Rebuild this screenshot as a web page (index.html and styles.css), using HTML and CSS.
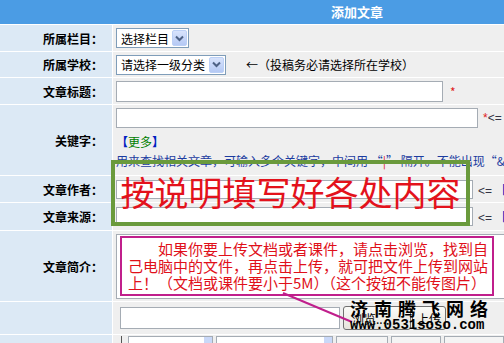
FILE: index.html
```html
<!DOCTYPE html>
<html lang="zh-CN">
<head>
    <meta charset="UTF-8">
    <title>添加文章</title>
    <link rel="stylesheet" href="styles.css">
</head>
<body>

<div class="page">
    <div class="head">添加文章</div>

    <div class="form">
        <div class="label">所属栏目：</div>
        <div class="field">
            <div class="select sel-col"><span>选择栏目</span><i class="arrow"><svg width="9" height="7" viewBox="0 0 9 7"><path d="M1 1.5 L4.5 5 L8 1.5" fill="none" stroke="#4d6185" stroke-width="2"/></svg></i></div>
        </div>

        <div class="label">所属学校：</div>
        <div class="field">
            <div class="select sel-school"><span>请选择一级分类</span><i class="arrow"><svg width="9" height="7" viewBox="0 0 9 7"><path d="M1 1.5 L4.5 5 L8 1.5" fill="none" stroke="#4d6185" stroke-width="2"/></svg></i></div>
            <span class="tip">←（投稿务必请选择所在学校）</span>
        </div>

        <div class="label">文章标题：</div>
        <div class="field">
            <div class="input in-title"></div>
            <span class="star">*</span>
        </div>

        <div class="label">关键字：</div>
        <div class="field field-col">
            <div class="line">
                <div class="input in-key"></div>
                <span class="side"><b class="star">*</b>&lt;=</span>
            </div>
            <div class="more"><span class="br">【</span>更多<span class="br">】</span></div>
            <div class="help">用来查找相关文章，可输入多个关键字，中间用 “<span class="red">|</span>” 隔开。不能出现“&amp;?”等特殊字符。</div>
        </div>

        <div class="label">文章作者：</div>
        <div class="field">
            <div class="input in-wide"></div>
            <span class="side">&lt;= <span class="br">【</span><span class="green">佚名</span><span class="br">】</span></span>
        </div>

        <div class="label">文章来源：</div>
        <div class="field">
            <div class="input in-wide"></div>
            <span class="side">&lt;= <span class="br">【</span><span class="green">本站原创</span><span class="br">】</span></span>
        </div>

        <div class="label">文章简介：</div>
        <div class="field">
            <div class="textarea"></div>
        </div>

        <div class="label"></div>
        <div class="field field-file">
            <div class="input in-file"></div>
            <div class="btn btn-browse">浏览...</div>
            <div class="btn btn-up">上传</div>
        </div>

        <div class="label"></div>
        <div class="field field-tools">
            <i class="bar"></i>
            <div class="tool t1"><i class="tarrow"></i></div>
            <div class="tool t2"><i class="tarrow"></i></div>
            <div class="tool t3"></div>
            <div class="tool t4"></div>
            <div class="tool t5"></div>
        </div>
    </div>

    <!-- annotations pasted over the form -->
    <div class="mark-box">按说明填写好各处内容</div>

    <div class="note">
        <p class="first">如果你要上传文档或者课件，请点击浏览，找到自</p>
        <p>己电脑中的文件，再点击上传，就可把文件上传到网站</p>
        <p>上！（文档或课件要小于5M）（这个按钮不能传图片）</p>
    </div>

    <svg class="pointer" width="80" height="40" viewBox="0 0 80 40">
        <line x1="3" y1="3" x2="72" y2="32" stroke="#c01f8c" stroke-width="2"/>
    </svg>

    <div class="brand">
        <div class="brand-name">济南腾飞网络</div>
        <div class="brand-url">www.0531soso.com</div>
    </div>
</div>

</body>
</html>
```

FILE: styles.css
```css
body {
    margin: 0;
    overflow: hidden;
    font-family: "Noto Sans CJK SC", sans-serif;
    font-size: 12px;
    background: #fff;
}
.page {
    position: relative;
    width: 720px;
    height: 343px;
    overflow: hidden;
}
.head {
    height: 24px;
    margin-bottom: 1px;
    padding-right: 6px;
    background: #4b9ce4;
    color: #fff;
    font-weight: bold;
    font-size: 13px;
    line-height: 24px;
    text-align: center;
}
.form {
    display: grid;
    grid-template-columns: 112px 1fr;
    grid-template-rows: 26px 25px 26px 70px 26px 27px 70px 32px 20px;
    gap: 1px;
    background: #fff;
}
.label {
    display: flex;
    align-items: center;
    justify-content: flex-end;
    padding-right: 9px;
    background: #dce9f5;
    color: #000;
    font-weight: bold;
}
.field {
    display: flex;
    align-items: center;
    padding-left: 3px;
    background: #efefef;
    white-space: nowrap;
}
.field-col {
    flex-direction: column;
    align-items: flex-start;
    padding-top: 3px;
}
.line {
    display: flex;
    align-items: center;
}
.select {
    display: flex;
    align-items: center;
    justify-content: space-between;
    height: 20px;
    box-sizing: border-box;
    padding: 0 1px 0 4px;
    border: 1px solid #7f9db9;
    background: #fff;
}
.sel-col {
    width: 73px;
}
.sel-school {
    width: 110px;
}
.arrow {
    display: flex;
    align-items: center;
    justify-content: center;
    width: 15px;
    height: 16px;
    box-sizing: border-box;
    border: 1px solid #bcd0f6;
    border-radius: 2px;
    background: linear-gradient(#d8e3fc, #b5c9f4);
}
.tip {
    margin-left: 20px;
    color: #000;
}
.input {
    height: 21px;
    box-sizing: border-box;
    border: 1px solid #a5acb4;
    background: #fff;
}
.in-title {
    width: 327px;
}
.in-key {
    width: 362px;
    height: 20px;
}
.in-wide {
    width: 357px;
    height: 19px;
}
.star {
    margin-left: 7px;
    color: #e02020;
    font-weight: normal;
}
.side {
    margin-left: 5px;
    font-family: "Liberation Sans", "Noto Sans CJK SC", sans-serif;
    color: #334;
}
.side .star {
    margin: 0;
}
.br {
    color: #0020c0;
    font-weight: bold;
}
.green {
    color: #008000;
}
.more {
    margin-top: 5px;
    color: #008000;
}
.help {
    margin-top: 2px;
    color: #1c3ca0;
}
.red {
    color: #e02020;
}
.textarea {
    width: 420px;
    height: 63px;
    margin-top: 1px;
    border: 1px solid #a5acb4;
    background: #fff;
}
.field-file {
    padding-left: 7px;
}
.in-file {
    width: 220px;
    height: 22px;
}
.btn {
    display: flex;
    align-items: center;
    justify-content: center;
    height: 24px;
    box-sizing: border-box;
    border: 1px solid #707070;
    border-radius: 3px;
    background: linear-gradient(#fbfbf8, #e6e4dc);
    color: #000;
}
.btn-browse {
    width: 68px;
    margin-left: 3px;
    justify-content: flex-start;
    padding-left: 8px;
}
.btn-up {
    width: 34px;
    margin-left: 1px;
}
.field-tools {
    align-items: flex-start;
    padding-top: 1px;
    padding-left: 8px;
}
.bar {
    width: 1px;
    height: 14px;
    margin-right: 6px;
    background: #555;
}
.tool {
    position: relative;
    height: 14px;
    margin-right: 3px;
    box-sizing: border-box;
    border: 1px solid #a5acb4;
    background: #fff;
}
.t1 {
    width: 85px;
}
.t2 {
    width: 117px;
}
.t3 {
    width: 52px;
    background: #f4f4f4;
}
.t4 {
    width: 50px;
    background: #f4f4f4;
}
.t5 {
    width: 60px;
    background: #f4f4f4;
}
.tarrow {
    position: absolute;
    right: 0;
    top: 0;
    width: 8px;
    height: 12px;
    background: #c9d8f8;
}
.mark-box {
    position: absolute;
    left: 111px;
    top: 160px;
    width: 359px;
    height: 66px;
    box-sizing: border-box;
    border: 4px solid #6a9a3c;
    color: #e3121c;
    font-size: 34px;
    line-height: 56px;
    text-align: center;
    white-space: nowrap;
}
.note {
    position: absolute;
    left: 120px;
    top: 236px;
    width: 374px;
    height: 60px;
    box-sizing: border-box;
    padding: 2px 4px 0 6px;
    border: 2px solid #c01f8c;
    background: #fff;
    color: #e0101a;
    font-size: 15px;
    line-height: 17px;
    white-space: nowrap;
}
.note p {
    margin: 0;
}
.note .first {
    text-indent: 2em;
}
.pointer {
    position: absolute;
    left: 280px;
    top: 290px;
}
.brand {
    position: absolute;
    left: 350px;
    top: 298px;
    color: #000;
    font-weight: bold;
}
.brand-name {
    font-size: 18px;
    line-height: 20px;
    letter-spacing: 6px;
}
.brand-url {
    font-family: "Liberation Mono", monospace;
    font-size: 14px;
    line-height: 15px;
}
```
